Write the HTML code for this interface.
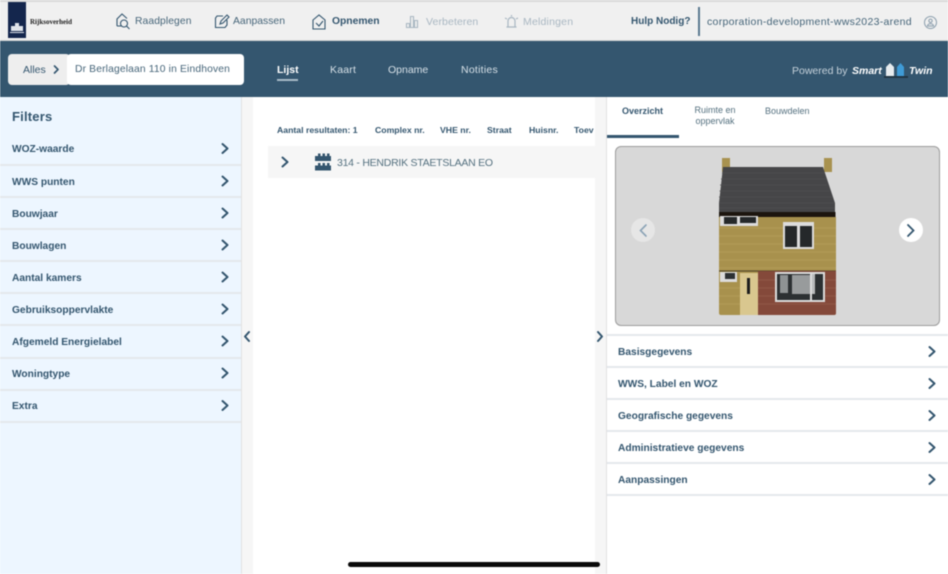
<!DOCTYPE html>
<html lang="nl"><head><meta charset="utf-8"><title>Smart Twin</title>
<style>
html,body{margin:0;padding:0;background:#fff}
#r{position:relative;width:948px;height:574px;overflow:hidden;background:#fff;font-family:"Liberation Sans",sans-serif;color:#34566f;filter:blur(.45px)}
#r div,#r span,#r svg{position:absolute}
.t{white-space:nowrap;line-height:14px}
.b{font-weight:700}
.line{height:2px;background:#e4e8ec}
.ch{fill:none;stroke:#34566f;stroke-width:2;stroke-linecap:round;stroke-linejoin:round}
.ic{fill:none;stroke:#34566f;stroke-width:1.1}
</style></head><body>
<div id="r">
<!-- top bar -->
<div style="left:0;top:0;width:948px;height:41px;background:#f0f0f0"></div>
<div style="left:0;top:0;width:948px;height:2px;background:#d9d9d9"></div>
<div style="left:0;top:40px;width:948px;height:1px;background:#d4d4d4"></div>
<div style="left:8px;top:2px;width:18px;height:36px;background:#14264d"></div>
<svg style="left:9px;top:21px" width="16" height="13" viewBox="0 0 16 13"><path d="M2 5h12v5H2zM6 2h4v3H6zM1 11h14v1H1z" fill="#dfe3ea"/></svg>
<span class="t" style="left:30px;top:15px;font:700 7px/14px 'Liberation Serif',serif;color:#222">Rijksoverheid</span>

<svg style="left:115px;top:13px" width="16" height="17" viewBox="0 0 16 17"><path class="ic" d="M2 13V6l5-5 5 4.500M2 13h5"/><circle class="ic" cx="9" cy="10.500" r="3.500"/><path class="ic" d="M11.500 13l3 3"/></svg>
<span class="t" style="left:135px;top:15px;font-size:10.300px;letter-spacing:.1px;color:#466579">Raadplegen</span>
<svg style="left:214px;top:13px" width="16" height="17" viewBox="0 0 16 17"><path class="ic" d="M9 3H3L1.500 5v9.500h9.500L13 12V7M6 11l1-3 6-6 2 2-6 6z"/></svg>
<span class="t" style="left:233px;top:15px;font-size:10.400px;color:#466579">Aanpassen</span>
<svg style="left:312px;top:14px" width="14" height="16" viewBox="0 0 14 16"><path class="ic" d="M1 6l6-5 6 5v9H1zM4 9l3 3 4-5"/></svg>
<span class="t b" style="left:332px;top:15px;font-size:10.300px">Opnemen</span>
<svg style="left:405px;top:14px" width="14" height="15" viewBox="0 0 14 15"><path d="M1.500 9.500h3v4h-3zM5.500 2.500h3v11h-3zM9.500 6.500h3v7h-3z" fill="none" stroke="#a9b7c2" stroke-width="1.100"/></svg>
<span class="t" style="left:426px;top:15px;font-size:10.500px;letter-spacing:.1px;color:#a9b7c2">Verbeteren</span>
<svg style="left:504px;top:14px" width="15" height="15" viewBox="0 0 15 15"><path d="M4 13V7a3.500 3.500 0 017 0v6zM1 4l2 1M14 4l-2 1M7.500 1v1.500M2.500 13h10" fill="none" stroke="#a9b7c2" stroke-width="1.200"/></svg>
<span class="t" style="left:523px;top:15px;font-size:10.500px;letter-spacing:.2px;color:#a9b7c2">Meldingen</span>
<span class="t b" style="left:631px;top:15px;font-size:10px">Hulp Nodig?</span>
<div style="left:698px;top:7px;width:1.500px;height:29px;background:#5b7a90"></div>
<span class="t" style="left:707px;top:15px;font-size:10.500px;letter-spacing:.3px;color:#466579">corporation-development-wws2023-arend</span>
<svg style="left:923px;top:15px" width="15" height="15" viewBox="0 0 15 15"><circle cx="7.500" cy="7.500" r="6" fill="none" stroke="#8a9dac" stroke-width="1"/><circle cx="7.500" cy="5.800" r="1.700" fill="none" stroke="#8a9dac"/><path d="M4.500 11c0-3 6-3 6 0z" fill="none" stroke="#8a9dac"/></svg>

<!-- blue bar -->
<div style="left:0;top:41px;width:948px;height:56px;background:#34566f"></div>
<div style="left:8px;top:54px;width:62px;height:31px;background:#eeeeee;border-radius:4px"></div>
<span class="t" style="left:23px;top:63px;font-size:10.500px">Alles</span>
<svg style="left:53px;top:65px" width="7" height="9" viewBox="0 0 7 9"><path class="ch" d="M1.500 1l3.500 3.500L1.500 8" style="stroke-width:1.600"/></svg>
<div style="left:67px;top:54px;width:177px;height:31px;background:#fff;border-radius:4px"></div>
<span class="t" style="left:75px;top:63px;font-size:10.300px;letter-spacing:.15px;color:#466579">Dr Berlagelaan 110 in Eindhoven</span>
<span class="t b" style="left:277px;top:63px;font-size:10.500px;color:#fff">Lijst</span>
<div style="left:277px;top:79px;width:21px;height:2px;background:#a9bac7"></div>
<span class="t" style="left:330px;top:63px;font-size:10.500px;letter-spacing:.2px;color:#d6e0e7">Kaart</span>
<span class="t" style="left:388px;top:63px;font-size:10.500px;color:#d6e0e7">Opname</span>
<span class="t" style="left:461px;top:63px;font-size:10.500px;letter-spacing:.25px;color:#d6e0e7">Notities</span>
<span class="t" style="left:792px;top:64px;font-size:10.500px;color:#c5d1da">Powered by</span>
<span class="t b" style="left:852px;top:64px;font-size:10.500px;font-style:italic;color:#fff">Smart</span>
<svg style="left:884px;top:62px" width="24" height="16" viewBox="0 0 24 16"><path d="M2 14V5l4-4 4 4v9z" fill="#e7ecef"/><path d="M13 14V5l3.500-4L20 5v9z" fill="#3f9bd6"/><path d="M0 15h24" stroke="#1c2c38" stroke-width="1.500"/></svg>
<span class="t b" style="left:909px;top:64px;font-size:10.500px;font-style:italic;color:#fff">Twin</span>

<!-- sidebar -->
<div style="left:0;top:97px;width:241px;height:477px;background:#edf6ff"></div>
<div style="left:241px;top:97px;width:12px;height:477px;background:#f6f6f6;border-left:1px solid #e2e2e2;box-sizing:border-box"></div>
<span class="t b" style="left:12px;top:110px;font-size:13px;letter-spacing:.2px">Filters</span>
<span class="t b" style="left:12px;top:143px;font-size:10.200px">WOZ-waarde</span>
<span class="t b" style="left:12px;top:176px;font-size:10.200px">WWS punten</span>
<span class="t b" style="left:12px;top:208px;font-size:10.200px">Bouwjaar</span>
<span class="t b" style="left:12px;top:240px;font-size:10.200px">Bouwlagen</span>
<span class="t b" style="left:12px;top:272px;font-size:10.200px">Aantal kamers</span>
<span class="t b" style="left:12px;top:304px;font-size:10.200px">Gebruiksoppervlakte</span>
<span class="t b" style="left:12px;top:336px;font-size:10.200px">Afgemeld Energielabel</span>
<span class="t b" style="left:12px;top:368px;font-size:10.200px">Woningtype</span>
<span class="t b" style="left:12px;top:400px;font-size:10.200px">Extra</span>
<div class="line" style="left:0;top:164px;width:241px"></div>
<div class="line" style="left:0;top:196px;width:241px"></div>
<div class="line" style="left:0;top:228px;width:241px"></div>
<div class="line" style="left:0;top:260px;width:241px"></div>
<div class="line" style="left:0;top:292px;width:241px"></div>
<div class="line" style="left:0;top:324px;width:241px"></div>
<div class="line" style="left:0;top:357px;width:241px"></div>
<div class="line" style="left:0;top:389px;width:241px"></div>
<div class="line" style="left:0;top:421px;width:241px"></div>

<!-- middle -->
<span class="t b" style="left:277px;top:123px;font-size:8.700px">Aantal resultaten: 1</span>
<span class="t b" style="left:375px;top:123px;font-size:8.700px">Complex nr.</span>
<span class="t b" style="left:440px;top:123px;font-size:8.700px">VHE nr.</span>
<span class="t b" style="left:487px;top:123px;font-size:8.700px">Straat</span>
<span class="t b" style="left:529px;top:123px;font-size:8.700px">Huisnr.</span>
<span class="t b" style="left:574px;top:123px;font-size:8.700px;width:21px;overflow:hidden">Toev</span>
<div style="left:268px;top:146px;width:327px;height:32px;background:#f6f6f6"></div>
<svg style="left:314px;top:153px" width="18" height="18" viewBox="0 0 18 18"><path d="M1 8V3h3V0.500h2.500V3h2V0.500H11V3h2V0.500h2.500V3H17v5zM1 17.500v-5h3V10h2.500v2.500h2V10H11v2.500h2V10h2.500v2.500H17v5z" fill="#34566f"/></svg>
<span class="t" style="left:337px;top:155.500px;font-size:10.500px;letter-spacing:-.25px;color:#54707f">314 - HENDRIK STAETSLAAN EO</span>

<!-- right gutter -->
<div style="left:595px;top:97px;width:12px;height:477px;background:#f6f6f6;border-right:1px solid #e2e2e2;box-sizing:border-box"></div>

<!-- right tabs -->
<span class="t b" style="left:622px;top:104px;font-size:9px">Overzicht</span>
<div style="left:607px;top:135px;width:72px;height:3px;background:#34566f"></div>
<span class="t" style="left:694px;top:105px;font-size:9px;line-height:11px;color:#54707f;text-align:center;width:42px">Ruimte en<br>oppervlak</span>
<span class="t" style="left:765px;top:104px;font-size:9px;color:#54707f">Bouwdelen</span>

<!-- card -->
<div style="left:615px;top:146px;width:325px;height:180px;background:#d8d8d8;border:1px solid #9c9c9c;border-radius:6px;box-sizing:border-box"></div>
<svg style="left:0;top:0" width="948" height="574" viewBox="0 0 948 574">
<rect x="722" y="158" width="8" height="14" fill="#a8924f"/>
<rect x="824" y="158" width="8" height="14" fill="#a8924f"/>
<path d="M723 167h100l12 36v9H719v-9z" fill="#464648"/>
<path d="M722 173h102M721 179h105M720 185h107M719.500 191h110M719 197h113M719 203h116M719 208h116" stroke="#505052" stroke-width=".8" fill="none"/>
<rect x="719" y="212" width="116.500" height="5" fill="#1c150e"/>
<path d="M719 217h117v96q0 2-2 2H721q-2 0-2-2z" fill="#a8914d"/>
<path d="M719 228h117M719 236h117M719 244h117M719 252h117M719 260h117M719 268h117M719 288h21M719 296h21M719 304h21" stroke="#b09a55" stroke-width="1.500" fill="none"/>
<path d="M719 271h117" stroke="#4c4328" stroke-width="1"/>
<path d="M758 271h78v42q0 2-2 2h-76z" fill="#84493a"/>
<path d="M758 280h78M758 288h78M758 296h78M758 304h78" stroke="#8d5445" stroke-width="1.500"/>
<rect x="740" y="273" width="18" height="42" fill="#d9c78f"/>
<rect x="747" y="278" width="3" height="16" fill="#1d1d1d"/>
<rect x="720" y="216" width="38" height="10" fill="#dcdcdc"/>
<rect x="724" y="217" width="13" height="7" fill="#25282a"/>
<rect x="740" y="217" width="16" height="6" fill="#25282a"/>
<rect x="783" y="222" width="31" height="27" fill="#dcdcdc"/>
<rect x="785" y="226" width="12" height="21" fill="#25282a"/>
<rect x="800" y="226" width="12" height="21" fill="#25282a"/>
<rect x="720" y="272" width="17" height="10" fill="#dcdcdc"/>
<rect x="725" y="273" width="10" height="6" fill="#2d3133"/>
<rect x="775" y="272" width="50" height="30" fill="#dcdcdc"/>
<rect x="777" y="274" width="46" height="26" fill="#2c3032"/>
<rect x="780" y="275" width="8" height="18" fill="#8f9394"/>
<rect x="792" y="275" width="18" height="19" fill="#989b9c"/>
<rect x="810" y="273" width="2" height="27" fill="#dcdcdc"/>
<rect x="812" y="274" width="3" height="20" fill="#b9bbbc"/>
<circle cx="643" cy="230" r="12" fill="#e6e6e6"/>
<path d="M646 225l-5.500 5.500 5.500 5.500" fill="none" stroke="#8ba3b6" stroke-width="1.600" stroke-linecap="round"/>
<circle cx="911" cy="230" r="12" fill="#fff"/>
<path d="M908 225l5.500 5.500-5.500 5.500" fill="none" stroke="#34566f" stroke-width="1.800" stroke-linecap="round"/>
</svg>

<!-- accordion -->
<div class="line" style="left:607px;top:334px;width:341px"></div>
<div class="line" style="left:607px;top:366px;width:341px"></div>
<div class="line" style="left:607px;top:398px;width:341px"></div>
<div class="line" style="left:607px;top:430px;width:341px"></div>
<div class="line" style="left:607px;top:462px;width:341px"></div>
<div class="line" style="left:607px;top:494px;width:341px"></div>
<span class="t b" style="left:618px;top:346px;font-size:10.200px">Basisgegevens</span>
<span class="t b" style="left:618px;top:378px;font-size:10.200px">WWS, Label en WOZ</span>
<span class="t b" style="left:618px;top:410px;font-size:10.200px">Geografische gegevens</span>
<span class="t b" style="left:618px;top:442px;font-size:10.200px">Administratieve gegevens</span>
<span class="t b" style="left:618px;top:474px;font-size:10.200px">Aanpassingen</span>

<!-- chevrons on top -->
<svg style="left:0;top:0" width="948" height="574" viewBox="0 0 948 574">
<g class="ch">
<path d="M222.500 144l5 4.500-5 4.500M222.500 176.500l5 4.500-5 4.500M222.500 208.500l5 4.500-5 4.500M222.500 240.500l5 4.500-5 4.500M222.500 272.500l5 4.500-5 4.500M222.500 304.500l5 4.500-5 4.500M222.500 336.500l5 4.500-5 4.500M222.500 368.500l5 4.500-5 4.500M222.500 401l5 4.500-5 4.500"/>
<path d="M249 332l-4 4.500 4 4.500M598 332l4 4.500-4 4.500M282.500 157.500l5 4.500-5 4.500"/>
<path d="M929.500 347l5 4.500-5 4.500M929.500 379l5 4.500-5 4.500M929.500 411l5 4.500-5 4.500M929.500 443l5 4.500-5 4.500M929.500 475l5 4.500-5 4.500"/>
</g></svg>

<!-- home bar -->
<div style="left:348px;top:562px;width:252px;height:5px;background:#0a0a0a;border-radius:3px"></div>
</div>
</body></html>
